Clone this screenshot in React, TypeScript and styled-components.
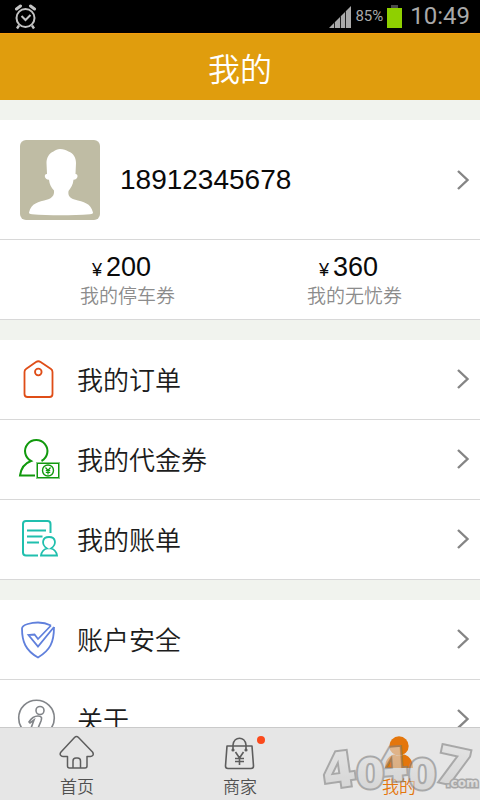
import React from "react";
import styled, { createGlobalStyle } from "styled-components";

const CJK = '"Noto Sans CJK SC", sans-serif';

const GlobalStyle = createGlobalStyle`
  * { box-sizing: border-box; }
  body { margin: 0; background: #f1f3ee; font-family: "Liberation Sans", ${CJK}; }
  a { color: inherit; text-decoration: none; }
  svg { display: block; flex: none; }
`;

const Screen = styled.div`
  display: flex;
  flex-direction: column;
  height: 100vh;
`;

const StatusBar = styled.div`
  display: flex;
  align-items: center;
  gap: 4px;
  height: 33px;
  flex: none;
  padding: 0 10px 0 14px;
  background: #000;
  color: #a9a9a9;
  font-family: Roboto, sans-serif;
`;

const StatusSpacer = styled.span`
  flex: 1;
`;

const Percent = styled.span`
  font-size: 15px;
  line-height: 33px;
`;

const Clock = styled.time`
  margin-left: 4px;
  font-size: 24px;
  line-height: 33px;
`;

const Header = styled.header`
  display: flex;
  align-items: center;
  justify-content: center;
  height: 67px;
  flex: none;
  border-top: 1px solid #f79c0c;
  background: #e09d0d;
`;

const Title = styled.h1`
  margin: 0;
  color: #fff;
  font: 350 32px/48px ${CJK};
`;

const Content = styled.main`
  flex: 1;
  min-height: 0;
  overflow-y: auto;
  scrollbar-width: none;
`;

const Section = styled.section`
  margin-top: 20px;
  background: #fff;
`;

const Profile = styled.a`
  display: flex;
  align-items: center;
  gap: 20px;
  height: 120px;
  padding: 0 10px 0 20px;
  border-bottom: 1px solid #d8d8d8;
`;

const Phone = styled.span`
  flex: 1;
  color: #0a0a0a;
  font-size: 28px;
  line-height: 32px;
`;

const Coupons = styled.div`
  display: grid;
  grid-template-columns: 1fr 1fr;
  height: 80px;
  padding: 0 12px 0 14px;
  border-bottom: 1px solid #d8d8d8;
`;

const Coupon = styled.a`
  display: flex;
  flex-direction: column;
  align-items: center;
  padding-top: 12px;
`;

const Amount = styled.span`
  display: flex;
  align-items: baseline;
  gap: 4px;
  margin-right: 12px;
  color: #0a0a0a;
  font-size: 27px;
  line-height: 30px;
`;

const Currency = styled.span`
  font-size: 18px;
`;

const CouponLabel = styled.span`
  color: #8c8c8c;
  font: 350 19px/20px ${CJK};
`;

const Row = styled.a`
  display: flex;
  align-items: center;
  height: 80px;
  padding: 0 10px 2px 16px;
  border-bottom: 1px solid #d8d8d8;
`;

const RowLabel = styled.span`
  flex: 1;
  margin-left: 16px;
  color: #1c1c1c;
  font: 350 26px/40px ${CJK};
`;

const TabBar = styled.nav`
  position: relative;
  display: grid;
  grid-template-columns: 154fr 172fr 146fr;
  height: 73px;
  flex: none;
  padding-right: 8px;
  border-top: 1px solid #cacaca;
  background: #e6e6e6;
`;

const Tab = styled.a<{ $active?: boolean }>`
  display: flex;
  flex-direction: column;
  align-items: center;
  padding-top: 5px;
  color: ${(p) => (p.$active ? "#e4760c" : "#505050")};
  font: 350 17px/26px ${CJK};
`;

const TabIcon = styled.span`
  position: relative;
  height: 40px;
`;

const Badge = styled.span`
  position: absolute;
  top: 3px;
  right: -5px;
  width: 8px;
  height: 8px;
  border-radius: 50%;
  background: #fb4a1c;
`;

const Watermark = styled.svg`
  position: absolute;
  right: 0;
  bottom: 4px;
  overflow: visible;
  pointer-events: none;
`;

const Chevron = () => (
  <svg width="14" height="22" viewBox="0 0 14 22" fill="none" stroke="#858585" strokeWidth="2.4">
    <path d="M2 2l9.500 9-9.500 9" />
  </svg>
);

const AlarmIcon = () => (
  <svg width="24" height="26" viewBox="0 0 24 26" fill="none" stroke="#c4c4c4" strokeWidth="2">
    <circle cx="11.500" cy="14" r="9" />
    <path d="M7.500 12l4 4 5-5" />
    <path d="M5 21.500l-2 3M18 21.500l2 3" strokeWidth="2.400" />
    <path d="M2.500 5L6.500 2M16.500 2l4 3" strokeWidth="3" strokeLinecap="round" />
  </svg>
);

const SignalIcon = () => (
  <svg width="22" height="22" viewBox="0 0 22 22">
    <path d="M0 22L22 0V22Z" fill="#aaa" />
    <path d="M5.500 16v6M11.500 10v12M16.500 5v17" stroke="#222" />
  </svg>
);

const BatteryIcon = () => (
  <svg width="15" height="23" viewBox="0 0 15 23">
    <path d="M4 0h7v3H4z" fill="#4a4a4a" />
    <path d="M0 3h15v20H0z" fill="#8fd000" />
  </svg>
);

const Avatar = () => (
  <svg width="80" height="80" viewBox="0 0 80 80" role="img" aria-label="头像">
    <rect width="80" height="80" rx="6" fill="#bfbca4" />
    <path
      fill="#fff"
      d="M40 9c3.500 0 6 1.300 8.500 2.500 5 2 7.500 6 7.500 11.500L55.500 34c3 0 3 5.500-2 5.800-.500 5-2.500 8-5 11.200-.700 5 1.500 7 6 8.500 9.500 2.500 16 3.500 18.500 13 0 1-1 1.500-3 1.700-18 1.400-41 1.400-58 0-2-.200-3-.700-3-1.700 2.500-9.500 9-10.500 18.500-13 4.500-1.500 7-4 6.500-9-2.800-3-4.500-6-5-10.700-5-.300-5.300-6-2-5.800L26.500 23c0-5.500 2.500-9.500 7-11.500C35.500 10.300 37.500 9 40 9Z"
    />
  </svg>
);

const OrderIcon = () => (
  <svg width="45" height="46" viewBox="16 356 45 46" fill="none" stroke="#df4d17" strokeWidth="1.800">
    <path d="M24.500 372q0-2 1.500-3l10-7q2.300-1.500 4.600 0l10.400 7q1.500 1 1.500 3v22q0 3-3 3H27.500q-3 0-3-3Z" />
    <circle cx="38.300" cy="372" r="3.300" />
  </svg>
);

const VoucherIcon = () => (
  <svg width="45" height="46" viewBox="16 436 45 46" fill="none" stroke="#11990d" strokeWidth="2">
    <path d="M35 475.500H20c1-7 4-12 11-14.500A11.200 11.200 0 1 1 41.500 461" />
    <rect x="37.500" y="463.500" width="21" height="14" strokeWidth="1" />
    <path d="M36.500 462.500h23v16h-23z" strokeWidth="1" strokeDasharray="1 1" />
    <circle cx="48" cy="470.500" r="5.500" strokeWidth="1.400" />
    <path d="M45.500 467.500l2.500 3 2.500-3M48 470.500v4M45.800 470.700h4.400M45.800 472.500h4.400" strokeWidth="1.200" />
  </svg>
);

const BillIcon = () => (
  <svg width="45" height="46" viewBox="16 516 45 46" fill="none" stroke="#20bfae" strokeWidth="2">
    <path d="M50.500 533v-9q0-3-3-3H26q-3 0-3 3v28.500q0 3 3 3h12" />
    <path d="M27 530.500h19M27 536.500h15.500M27 542.500h12" />
    <path d="M47 548.500c-6-4-5-11.500 2-11.500s8 7.500 2 11.500c4 1 5.500 3.500 6 7H41c.500-3.500 2-6 6-7Z" strokeWidth="1.800" />
  </svg>
);

const SafetyIcon = () => (
  <svg width="45" height="46" viewBox="16 616 45 46" fill="none" stroke="#6080dc" strokeWidth="1.800">
    <path d="M51 625.500c-4-2-8-3-13-3-6 0-16 2-16 6 0 13 3.500 22 16 29 12-7 16-15 16-30.500" />
    <path d="M51 625.500l-13 13.500-3.500-4.500-6 .500 9.500 11.500L54 627" />
  </svg>
);

const AboutIcon = () => (
  <svg width="45" height="46" viewBox="16 696 45 46" fill="none" stroke="#828589" strokeWidth="1.600">
    <circle cx="36.500" cy="718" r="17.800" />
    <circle cx="40" cy="710.500" r="4" />
    <path d="M29 722c3-5 6-6 9-6 4 0 4 2 3 5l-5 12c-2 2-7 1-6-2l4-11-4 3Z" />
  </svg>
);

const HomeIcon = () => (
  <svg width="40" height="40" viewBox="57 733 40 40" fill="none" stroke="#5d5d5d" strokeWidth="1.500" strokeLinejoin="round">
    <path d="M74.500 737.500q2-2 4 0l14 14.500c2 3-.500 4.500-2 4.500H87V766q0 2-2 2H69.500q-2 0-2-2v-9.500H63c-2 0-4-2-2-4.500Z" />
    <path d="M73 768v-7q0-3 3-3h1.500q3 0 3 3v7" />
  </svg>
);

const ShopIcon = () => (
  <svg width="40" height="40" viewBox="220 733 40 40" fill="none" stroke="#5d5d5d" strokeWidth="1.600" strokeLinejoin="round">
    <path d="M227 746h25l1.500 20q0 2.500-2.500 2.500h-23q-2.500 0-2.500-2.500Z" />
    <path d="M233 749v-4c1-9 12-9 13 0v4" />
    <circle cx="233" cy="750" r="0.800" fill="#5d5d5d" />
    <circle cx="246" cy="750" r="0.800" fill="#5d5d5d" />
    <path d="M235.500 752l4 6 4-6M239.500 758v7M235 758.500h9M235 761.500h9" />
  </svg>
);

const MineIcon = () => (
  <svg width="40" height="40" viewBox="379 733 40 40" fill="#e4760c">
    <circle cx="399" cy="746" r="9.700" />
    <path d="M385 768c0-8 4-12 9-13.500q5 2.500 10 0c5 1.500 9 5.500 9 13.500Z" />
  </svg>
);

const services = [
  { label: "我的订单", Icon: OrderIcon },
  { label: "我的代金券", Icon: VoucherIcon },
  { label: "我的账单", Icon: BillIcon },
];

const settings = [
  { label: "账户安全", Icon: SafetyIcon },
  { label: "关于", Icon: AboutIcon },
];

const Menu = ({ items }: { items: typeof services }) => (
  <Section>
    {items.map(({ label, Icon }) => (
      <Row href="#" key={label}>
        <Icon />
        <RowLabel>{label}</RowLabel>
        <Chevron />
      </Row>
    ))}
  </Section>
);

const SiteMark = () => (
  <Watermark width="160" height="54" viewBox="320 742 160 54" aria-label="40407.com">
    <defs>
      <linearGradient id="silver" x1="0" y1="0" x2="0" y2="1">
        <stop offset="0" stopColor="#e4e4e4" />
        <stop offset="1" stopColor="#c8c8c8" />
      </linearGradient>
    </defs>
    <g
      fill="url(#silver)"
      stroke="#808080"
      strokeWidth="4"
      strokeLinejoin="miter"
      paintOrder="stroke"
      fontFamily="DejaVu Sans, sans-serif"
      fontWeight="700"
      opacity="0.600"
    >
      <text x="322" y="787" fontSize="48" transform="rotate(-8 340 768)">4</text>
      <text x="376" y="781" fontSize="46" transform="rotate(-4 393 766)">4</text>
      <text x="436" y="784" fontSize="50" transform="rotate(12 452 766)">7</text>
      <text x="356" y="788" fontSize="41">0</text>
      <text x="408" y="789" fontSize="41">0</text>
      <text x="446" y="787" fontSize="12" strokeWidth="3">.com</text>
    </g>
  </Watermark>
);

export default function App() {
  return (
    <Screen>
      <GlobalStyle />
      <StatusBar>
        <AlarmIcon />
        <StatusSpacer />
        <SignalIcon />
        <Percent>85%</Percent>
        <BatteryIcon />
        <Clock>10:49</Clock>
      </StatusBar>
      <Header>
        <Title>我的</Title>
      </Header>
      <Content>
        <Section>
          <Profile href="#">
            <Avatar />
            <Phone>18912345678</Phone>
            <Chevron />
          </Profile>
          <Coupons>
            <Coupon href="#">
              <Amount>
                <Currency>¥</Currency>200
              </Amount>
              <CouponLabel>我的停车券</CouponLabel>
            </Coupon>
            <Coupon href="#">
              <Amount>
                <Currency>¥</Currency>360
              </Amount>
              <CouponLabel>我的无忧券</CouponLabel>
            </Coupon>
          </Coupons>
        </Section>
        <Menu items={services} />
        <Menu items={settings} />
      </Content>
      <TabBar>
        <Tab href="#">
          <TabIcon>
            <HomeIcon />
          </TabIcon>
          首页
        </Tab>
        <Tab href="#">
          <TabIcon>
            <ShopIcon />
            <Badge />
          </TabIcon>
          商家
        </Tab>
        <Tab href="#" $active aria-current="page">
          <TabIcon>
            <MineIcon />
          </TabIcon>
          我的
        </Tab>
        <SiteMark />
      </TabBar>
    </Screen>
  );
}
